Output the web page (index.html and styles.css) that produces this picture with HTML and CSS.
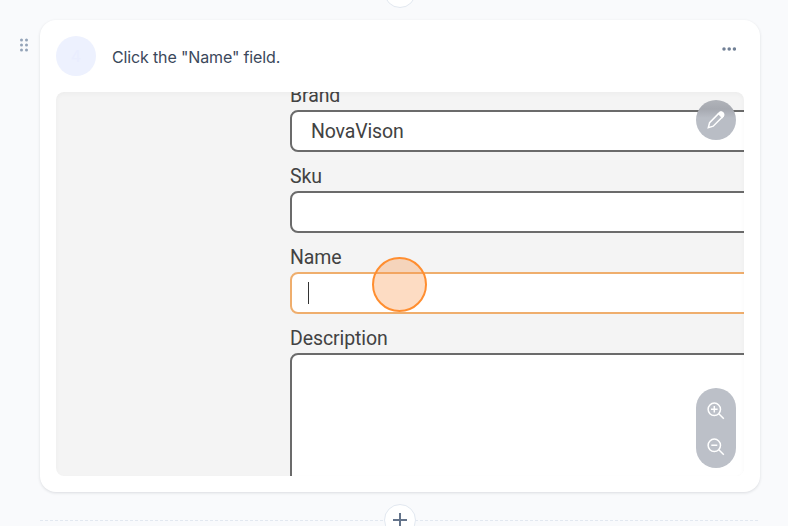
FILE: index.html
```html
<!DOCTYPE html>
<html lang="en">
<head>
<meta charset="utf-8">
<title>Guide editor</title>
<link rel="stylesheet" href="styles.css">
</head>
<body>
<main class="editor">
  <div class="insert insert-top"><span class="insert-button"></span></div>
  <div class="step">
    <svg class="grip" width="8" height="14" viewBox="0 0 8 14"><circle cx="1.5" cy="2" r="1.5"/><circle cx="6.5" cy="2" r="1.5"/><circle cx="1.5" cy="7" r="1.5"/><circle cx="6.5" cy="7" r="1.5"/><circle cx="1.5" cy="12" r="1.5"/><circle cx="6.5" cy="12" r="1.5"/></svg>
    <section class="card">
      <header class="card-head">
        <span class="number">4</span>
        <h1 class="title">Click the "Name" field.</h1>
        <svg class="more" width="14" height="4" viewBox="0 0 14 4"><circle cx="2" cy="2" r="1.75"/><circle cx="7.2" cy="2" r="1.75"/><circle cx="12.4" cy="2" r="1.75"/></svg>
      </header>
      <div class="shot">
        <div class="form">
          <div class="label">Brand</div>
          <div class="field">NovaVison</div>
          <div class="label">Sku</div>
          <div class="field"></div>
          <div class="label">Name</div>
          <div class="field active"><span class="caret"></span></div>
          <div class="label">Description</div>
          <div class="field area"></div>
        </div>
        <span class="marker"></span>
        <span class="tool edit">
          <svg width="18" height="18" viewBox="0 0 18 18"><path d="M1.3 16.7 2.6 11.6 11.8 2.4a2.5 2.5 0 0 1 3.8 3.4L6.2 15.2Z"/><path class="solid" d="m11.6 2.6.8-.6a2.4 2.4 0 0 1 3.6 3.4l-.8 1Z"/></svg>
        </span>
        <span class="tool zoom">
          <svg width="18" height="18" viewBox="0 0 18 18"><circle cx="7.3" cy="7.3" r="6.2"/><path d="m11.8 11.8 5 5M4 7.3h6.6M7.3 4v6.6"/></svg>
          <svg width="18" height="18" viewBox="0 0 18 18"><circle cx="7.3" cy="7.3" r="6.2"/><path d="m11.8 11.8 5 5M4.3 7.3h6"/></svg>
        </span>
      </div>
    </section>
  </div>
  <div class="insert insert-bottom"><span class="insert-button"><svg width="14" height="14" viewBox="0 0 14 14"><path d="M0 7h14M7 0v14"/></svg></span></div>
</main>
</body>
</html>
```
FILE: styles.css
```css
* { box-sizing: border-box; }
body {
  margin: 0;
  height: 526px;
  overflow: hidden;
  background: #f9fafc;
  font-family: Inter, "Liberation Sans", sans-serif;
}
.editor { display: flex; flex-direction: column; gap: 12px; margin-top: -24px; }
.insert {
  width: 720px;
  height: 32px;
  margin-left: 40px;
  display: flex;
  justify-content: center;
  background: repeating-linear-gradient(90deg, #e2e8f0 0 3px, transparent 3px 5px) 0 16px / 100% 1px no-repeat;
}
.insert-button {
  width: 32px;
  height: 32px;
  border: 1px solid #e2e8f0;
  border-radius: 50%;
  background: #fff;
  display: flex;
  align-items: center;
  justify-content: center;
}
.insert-button svg { stroke: #64748b; stroke-width: 2; }
.step { display: flex; align-items: flex-start; }
.grip { margin: 18px 12px 0 20px; fill: #94a3b8; }
.card {
  width: 720px;
  height: 472px;
  padding: 16px;
  border-radius: 16px;
  background: #fff;
  box-shadow: 0 1px 3px rgba(15, 23, 42, .13);
}
.card-head { display: flex; align-items: flex-start; height: 56px; }
.number {
  width: 40px;
  height: 40px;
  border-radius: 50%;
  background: #edf1fe;
  color: #e9edfe;
  font-size: 16px;
  line-height: 40px;
  text-align: center;
}
.title {
  margin: 9px 0 0 16px;
  color: #3b485b;
  font-size: 16px;
  font-weight: 400;
  line-height: 24px;
  letter-spacing: -.14px;
}
.more { margin: 11px 8px 0 auto; fill: #718096; }
.shot {
  position: relative;
  height: 384px;
  padding-left: 234px;
  border-radius: 8px;
  overflow: hidden;
  background: #f4f4f4;
}
.shot::after {
  content: "";
  position: absolute;
  inset: 0;
  border-radius: 8px;
  box-shadow: inset 0 2px 4px rgba(0, 0, 0, .03);
}
.form { margin-top: -21px; width: 480px; font-family: Roboto, sans-serif; color: #424242; }
.label { height: 39px; font-size: 19.5px; line-height: 49px; letter-spacing: -.1px; }
.field {
  height: 42px;
  padding-left: 19px;
  border: 2px solid #6b6b6b;
  border-radius: 8px;
  background: #fff;
  font-size: 19.5px;
  letter-spacing: -.15px;
  line-height: 40px;
}
.field.active { border-color: #efae6d; padding: 8px 0 0 16px; }
.field.area { height: 160px; }
.caret { display: block; width: 1px; height: 22px; background: #333; }
.marker {
  position: absolute;
  left: 316px;
  top: 165px;
  width: 55px;
  height: 55px;
  border: 2px solid #ff8e30;
  border-radius: 50%;
  background: rgba(249, 148, 72, .33);
}
.tool {
  position: absolute;
  z-index: 1;
  right: 8px;
  width: 40px;
  border-radius: 20px;
  background: #bcc0c8;
  display: flex;
  flex-direction: column;
  align-items: center;
}
.tool svg { fill: none; stroke: #fff; stroke-width: 1.5; margin-right: 1px; }
.tool .solid { fill: #fff; }
.edit { top: 8px; height: 40px; padding-top: 11px; background: linear-gradient(#b0b3b9, #a6a9b0 9px, #aaadb5 11px, #b9bdc5 18px); }
.zoom { bottom: 8px; height: 80px; padding-top: 14px; gap: 18px; }
```
